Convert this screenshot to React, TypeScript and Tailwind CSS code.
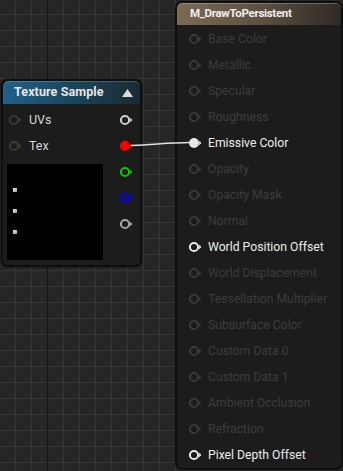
import React from "react";

type PinProps = { color: string; filled?: boolean };

function Pin({ color, filled }: PinProps) {
  return (
    <svg width="14" height="12" viewBox="0 0 14 12" className="shrink-0">
      <circle cx="6" cy="6" r={filled ? 5 : 4.1} fill={filled ? color : "none"} stroke={color} strokeWidth={filled ? 0 : 2} />
      <path d="M11.2 3.6 L13.4 6 L11.2 8.4 Z" fill={color} />
    </svg>
  );
}

const inputs: { label: string; active?: boolean; filled?: boolean }[] = [
  { label: "Base Color" },
  { label: "Metallic" },
  { label: "Specular" },
  { label: "Roughness" },
  { label: "Emissive Color", active: true, filled: true },
  { label: "Opacity" },
  { label: "Opacity Mask" },
  { label: "Normal" },
  { label: "World Position Offset", active: true },
  { label: "World Displacement" },
  { label: "Tessellation Multiplier" },
  { label: "Subsurface Color" },
  { label: "Custom Data 0" },
  { label: "Custom Data 1" },
  { label: "Ambient Occlusion" },
  { label: "Refraction" },
  { label: "Pixel Depth Offset", active: true },
];

export default function App() {
  return (
    <div
      className="relative w-[343px] h-[471px] overflow-hidden bg-[#262626] bg-[linear-gradient(to_right,#363636_1px,transparent_1px),linear-gradient(to_bottom,#363636_1px,transparent_1px)] bg-[size:16px_16px] bg-[position:15px_14px]"
      style={{ fontFamily: "Roboto, 'Noto Sans', sans-serif" }}
    >
      {/* major grid line */}
      <div className="absolute left-[47px] top-0 h-full w-[1px] bg-[#141414]" />

      {/* Texture Sample node */}
      <div className="absolute left-[1px] top-[79px] w-[141px] h-[188px] rounded-[7px] bg-[#0e0e0e] p-[2px] shadow-[0_0_2px_rgba(0,0,0,0.8)]">
        <div className="flex h-full flex-col rounded-[5px] bg-[#1b1c1b] overflow-hidden">
          <div className="flex h-[23px] items-center justify-between rounded-t-[5px] bg-[linear-gradient(to_right,#22618a,#1a4862_45%,#1b2a33)] pl-[11px] pr-[6px] shadow-[inset_0_1px_0_rgba(255,255,255,0.2)]">
            <span className="text-[12.5px] font-bold text-[#e6e6e6] tracking-[0.1px]">Texture Sample</span>
            <svg width="13" height="10" viewBox="0 0 13 10">
              <path d="M1 9 L6.5 1 L12 9 Z" fill="#dcdcdc" />
            </svg>
          </div>
          <div className="flex flex-1 justify-between pl-[5px] pr-[7px] pt-[5px]">
            <div className="flex flex-col">
              <div className="flex h-[26px] items-center gap-[7px] pb-[4px]">
                <Pin color="#3a3a3a" />
                <span className="text-[12.5px] text-[#d6d6d6]">UVs</span>
              </div>
              <div className="flex h-[26px] items-center gap-[7px] pb-[4px]">
                <Pin color="#3a3a3a" />
                <span className="text-[12.5px] text-[#d6d6d6]">Tex</span>
              </div>
              <div className="relative mt-[3px] ml-[-1px] h-[96px] w-[96px] bg-black">
                <div className="absolute left-[6px] top-[24px] h-[4px] w-[4px] bg-[linear-gradient(135deg,#f0f0f0,#9a9a9a)]" />
                <div className="absolute left-[6px] top-[45px] h-[4px] w-[4px] bg-[linear-gradient(135deg,#f0f0f0,#9a9a9a)]" />
                <div className="absolute left-[6px] top-[66px] h-[4px] w-[4px] bg-[linear-gradient(135deg,#f0f0f0,#9a9a9a)]" />
              </div>
            </div>
            <div className="flex flex-col">
              <div className="flex h-[26px] items-center pb-[4px]"><Pin color="#d0d0d0" /></div>
              <div className="flex h-[26px] items-center pb-[4px]"><Pin color="#ff0000" filled /></div>
              <div className="flex h-[26px] items-center pb-[4px]"><Pin color="#00d000" /></div>
              <div className="flex h-[26px] items-center pb-[4px]"><Pin color="#0000ff" /></div>
              <div className="flex h-[26px] items-center pb-[4px]"><Pin color="#a8a8a8" /></div>
            </div>
          </div>
        </div>
      </div>

      {/* Material node */}
      <div className="absolute left-[175px] top-[1px] w-[168px] h-[469px] rounded-[7px] bg-[#0e0e0e] p-[2px]">
        <div className="flex h-full flex-col rounded-[5px] bg-[#1b1c1b] overflow-hidden">
          <div className="flex h-[22px] items-center rounded-t-[5px] bg-[linear-gradient(to_right,#7b6a55,#5e5141_50%,#2e2a25)] pl-[13px] shadow-[inset_0_1px_0_rgba(255,255,255,0.25)]">
            <span className="text-[11.5px] font-bold tracking-[-0.3px] text-[#f0f0f0]">M_DrawToPersistent</span>
          </div>
          <div className="flex flex-col pl-[11px] pt-[1px]">
            {inputs.map((p) => (
              <div key={p.label} className="flex h-[26px] items-center gap-[6px]">
                <Pin color={p.active ? "#e8e8e8" : "#3a3a3a"} filled={p.filled} />
                <span className={"text-[12.2px] whitespace-nowrap " + (p.active ? "text-[#ececec]" : "text-[#3c3c3c]")}>{p.label}</span>
              </div>
            ))}
          </div>
        </div>
      </div>

      {/* wire */}
      <svg className="absolute left-0 top-0 pointer-events-none" width="343" height="471">
        <path d="M131 145.5 C155 145, 165 142.5, 191 142.5" stroke="#e0e0e0" strokeWidth="1.4" fill="none" />
      </svg>
    </div>
  );
}
